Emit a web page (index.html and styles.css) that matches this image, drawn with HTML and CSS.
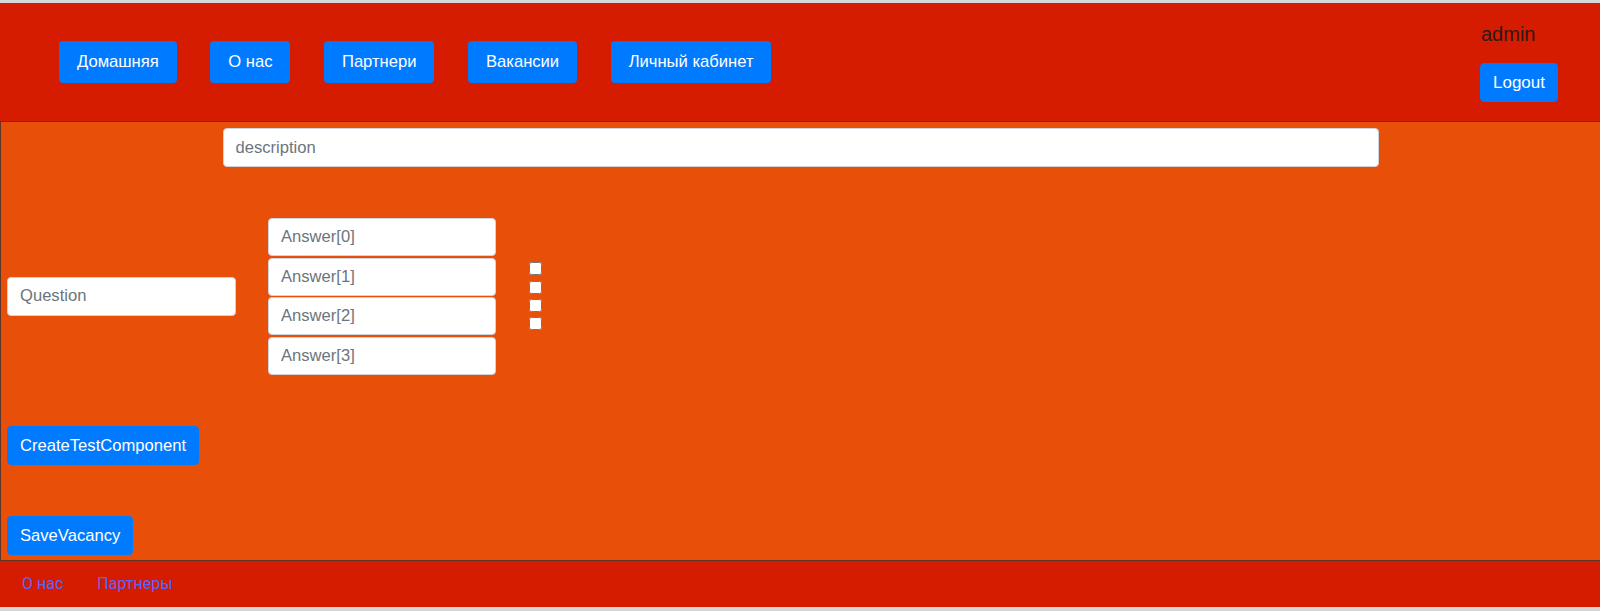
FILE: index.html
```html
<!DOCTYPE html>
<html lang="ru">
<head>
<meta charset="utf-8">
<title>Vacancy</title>
<link rel="stylesheet" href="styles.css">
</head>
<body>
<div class="page">
  <header class="header">
    <nav class="nav">
      <a class="nav-btn" href="#">Домашняя</a>
      <a class="nav-btn" href="#">О нас</a>
      <a class="nav-btn" href="#">Партнери</a>
      <a class="nav-btn" href="#">Вакансии</a>
      <a class="nav-btn" href="#">Личный кабинет</a>
    </nav>
    <div class="user">
      <div class="user-name">admin</div>
      <button class="btn btn-logout">Logout</button>
    </div>
  </header>
  <main class="main">
    <div class="desc-wrap">
      <input class="field field-desc" type="text" placeholder="description">
    </div>
    <div class="question-row">
      <input class="field field-question" type="text" placeholder="Question">
      <div class="answers">
        <input class="field field-answer" type="text" placeholder="Answer[0]">
        <input class="field field-answer" type="text" placeholder="Answer[1]">
        <input class="field field-answer" type="text" placeholder="Answer[2]">
        <input class="field field-answer" type="text" placeholder="Answer[3]">
      </div>
      <div class="checks">
        <input class="check" type="checkbox">
        <input class="check" type="checkbox">
        <input class="check" type="checkbox">
        <input class="check" type="checkbox">
      </div>
    </div>
    <div class="action"><button class="btn">CreateTestComponent</button></div>
    <div class="action"><button class="btn">SaveVacancy</button></div>
  </main>
  <footer class="footer">
    <a class="foot-link" href="#">О нас</a>
    <a class="foot-link" href="#">Партнеры</a>
  </footer>
</div>
</body>
</html>
```

FILE: styles.css
```css
html {
  background: #d6d6d6;
}
body {
  margin: 0;
  font-family: "Liberation Sans", Arial, sans-serif;
  font-size: 16px;
}
.page {
  border-top: 3px solid #d8d8d8;
}
.header {
  height: 118px;
  background: #d51b00;
  display: flex;
  align-items: center;
  justify-content: space-between;
  padding: 0 42px 0 59px;
  box-sizing: border-box;
}
.nav {
  display: flex;
  gap: 33.5px;
}
.nav-btn {
  display: block;
  background: #007bff;
  color: #fff;
  text-decoration: none;
  font-size: 16.6px;
  line-height: 24px;
  padding: 9px 18px;
  border-radius: 4px;
}
.user {
  display: flex;
  flex-direction: column;
  align-items: flex-start;
  gap: 15px;
  margin-top: -3px;
}
.user-name {
  font-size: 20px;
  line-height: 28px;
  color: #2e1a16;
  padding-left: 1px;
}
.btn {
  font-family: "Liberation Sans", Arial, sans-serif;
  background: #007bff;
  color: #fff;
  border: 1px solid #007bff;
  border-radius: 4px;
  font-size: 16.6px;
  line-height: 25px;
  padding: 6px 12px;
  cursor: pointer;
}
.btn-logout {
  font-size: 17px;
  line-height: 25px;
}
.main {
  background: #e8500a;
  border: 1px solid #5e3526;
  border-right: none;
  padding: 6px 6px 5px;
  display: flex;
  flex-direction: column;
  gap: 51px;
}
.desc-wrap {
  display: flex;
  justify-content: center;
}
.field {
  font-family: "Liberation Sans", Arial, sans-serif;
  font-size: 16.6px;
  height: 39px;
  box-sizing: border-box;
  padding: 6px 12px;
  border: 1px solid #ced4da;
  border-radius: 4px;
  background: #fff;
  color: #495057;
  margin: 0;
}
.field::placeholder {
  color: #6c757d;
}
.field-desc {
  width: 1156px;
}
.question-row {
  display: flex;
  align-items: center;
}
.field-question {
  width: 229px;
}
.answers {
  display: flex;
  flex-direction: column;
  gap: 1.5px;
  margin-left: 32px;
}
.field-answer {
  width: 228px;
  height: 38px;
}
.checks {
  display: flex;
  flex-direction: column;
  gap: 5.3px;
  margin-left: 33px;
}
.check {
  width: 13px;
  height: 13px;
  margin: 0;
}
.action {
  display: flex;
}
.footer {
  height: 46px;
  background: #d51b00;
  display: flex;
  align-items: center;
  padding-left: 22px;
  gap: 34px;
}
.foot-link {
  font-family: Roboto, "Liberation Sans", sans-serif;
  color: #5866f8;
  text-decoration: none;
  font-size: 16px;
}
```
